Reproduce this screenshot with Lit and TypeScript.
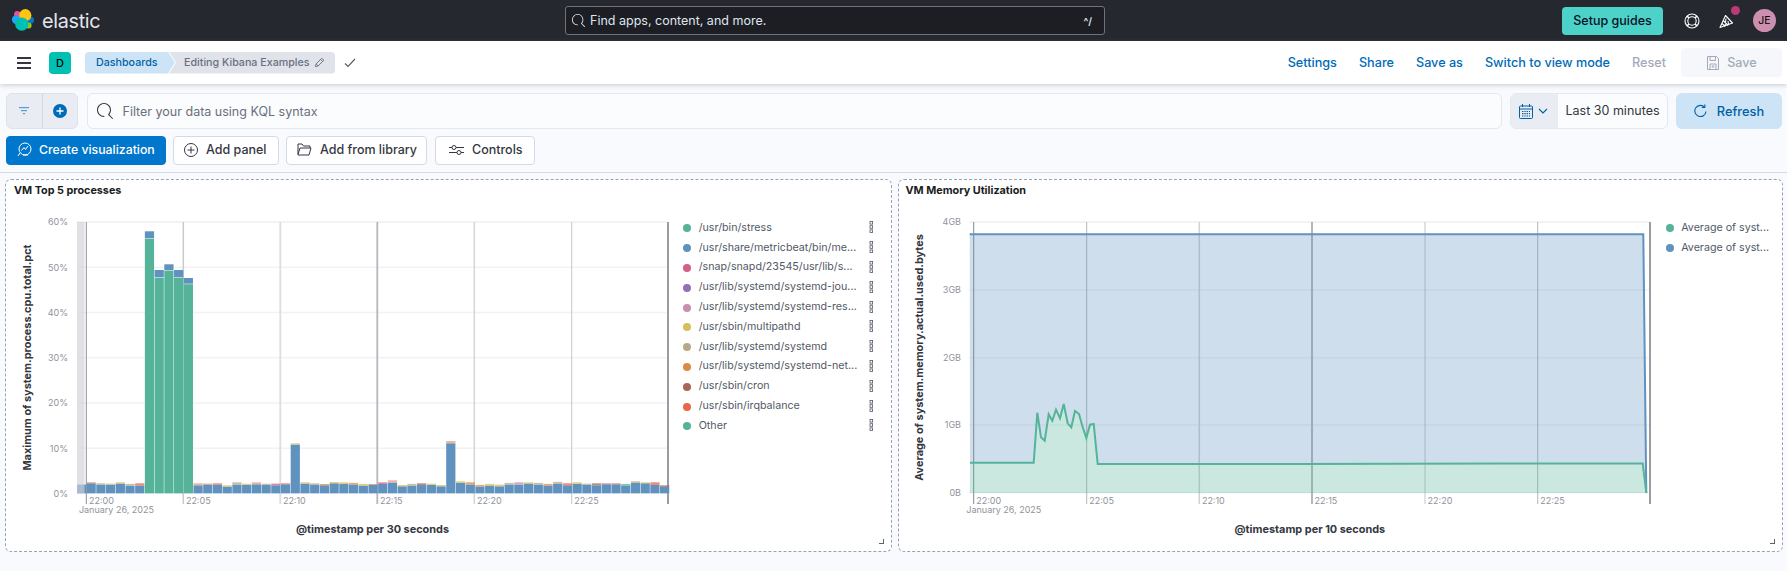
import { LitElement, css, html, svg } from 'lit';
import { customElement } from 'lit/decorators.js';

const C = {
    stress: '#54B399',
    beat: '#6092C0',
    snap: '#D36086',
    jou: '#9170B8',
    res: '#CA8EAE',
    multi: '#D6BF57',
    sysd: '#B9A888',
    net: '#DA8B45',
    cron: '#AA6556',
    irq: '#E7664C',
};

const topLegend: [string, string][] = [
    ['/usr/bin/stress', C.stress],
    ['/usr/share/metricbeat/bin/me...', C.beat],
    ['/snap/snapd/23545/usr/lib/s...', C.snap],
    ['/usr/lib/systemd/systemd-jou...', C.jou],
    ['/usr/lib/systemd/systemd-res...', C.res],
    ['/usr/sbin/multipathd', C.multi],
    ['/usr/lib/systemd/systemd', C.sysd],
    ['/usr/lib/systemd/systemd-net...', C.net],
    ['/usr/sbin/cron', C.cron],
    ['/usr/sbin/irqbalance', C.irq],
    ['Other', C.stress],
];

// [blue height, cap height, cap colour] in px above the 0% line
const smallBars: [number, number, string][] = [
    [8.3, 1, '#b9a9c8'], [10, 1, C.net], [8.7, 1.3, C.sysd], [8.7, 1, C.multi], [9.7, 1.3, C.multi], [7.7, 1.7, C.sysd], [7.7, 2.3, C.irq],
];
const afterSpike: [number, number, string][] = [
    [8, 2, '#e79a78'], [8.7, 1, C.net], [8.7, 1.3, C.irq], [6.7, 1.3, C.multi], [8.7, 2.3, C.sysd], [8.3, 1.3, C.multi],
    [9, 2, '#e79a88'], [8.3, 1.3, C.sysd], [8, 1.7, C.snap], [9, 1, C.irq], [48.7, 1.3, C.multi], [9.7, 1.3, C.multi],
    [8.7, 1.3, C.sysd], [8, 1.3, C.net], [10, 1.3, C.multi], [9.3, 1.7, C.multi], [8.7, 1.7, C.net], [7.7, 1.7, C.multi],
    [8.3, 1, C.net], [9.3, 1.7, C.snap], [10.7, 2.3, '#e79a88'], [7, 1.3, C.multi], [7.7, 1.7, C.sysd], [8.3, 1.7, C.cron],
    [8.3, 1.3, C.multi], [7, 1.3, C.multi], [50, 2.3, '#e79a88'], [10.3, 1.7, C.multi], [8.7, 2.3, C.net],
    [6.7, 1.7, C.net], [7.7, 1.7, C.multi], [7, 1.7, C.multi], [8.7, 1.7, C.sysd], [8.7, 2.3, C.res], [9.7, 1.3, C.multi],
    [8.7, 1.7, C.sysd], [7.7, 1.7, C.net], [9.7, 1.7, C.sysd], [8, 2, C.irq], [9.3, 1.7, C.multi], [8.3, 1.3, C.sysd],
    [8, 2, C.cron], [9, 1, C.snap], [9, 1, C.irq], [7.3, 2, C.stress], [10.3, 1.7, C.sysd], [10, 1, C.multi], [8.3, 2.7, C.irq], [6.3, 1.7, C.cron],
];
// [top of stack, top of green] in page px
const spike = [[231.3, 238.3], [270, 277.3], [264.3, 270], [270, 277.3], [278, 283.7]];

const greenLine: [number, number][] = [
    [969, 462.7], [1032.7, 462.7], [1036.3, 412.7], [1040, 437.3], [1043.7, 440.7], [1047.7, 414.3], [1051.3, 420.7],
    [1055, 409.7], [1059, 418.3], [1062.7, 404], [1066.7, 423.3], [1070.3, 427.3], [1074, 411], [1078, 414],
    [1081.7, 427.3], [1085.3, 438], [1089, 424.7], [1092.7, 424], [1096.7, 464], [1300, 464], [1500, 463.5], [1641.7, 463.5], [1645.3, 493],
];

type VLine = [number, number, string];
const topLines: VLine[] = [[86.3, 1, '#8e9096'], [183.3, 1.5, '#c9cbd0'], [280.3, 1.8, '#dcdde1'], [377.3, 1.8, '#b5b7bc'], [474.3, 1.5, '#d4d6da'], [571.7, 1, '#c4c6cb'], [668, 2, '#9a9ca2']];
const memLines: VLine[] = [[972.7, 1, '#85878d'], [1085.7, 1, '#b3b6bb'], [1198.3, 1.5, '#cfd1d5'], [1311, 2, '#b5b7bc'], [1424, 1, '#c4c6cb'], [1536.7, 1, '#b3b6bb'], [1649, 2, '#9a9ca2']];
const times = ['22:00', '22:05', '22:10', '22:15', '22:20', '22:25'];

const searchPath = 'M11.271 11.978l3.872 3.873a.502.502 0 00.708 0 .502.502 0 000-.708l-3.565-3.564c2.38-2.747 2.267-6.923-.342-9.532-2.73-2.73-7.17-2.73-9.898 0-2.728 2.729-2.728 7.17 0 9.9a6.955 6.955 0 004.949 2.05.5.5 0 000-1 5.96 5.96 0 01-4.242-1.757 6.01 6.01 0 010-8.486c2.337-2.34 6.143-2.34 8.484 0a6.01 6.01 0 010 8.486.5.5 0 00.034.738z';

function axisFrame(left: number, right: number, lines: VLine[], ys: [string, number][], labelX: number, yTitle: string, yTitleX: number, xTitle: string) {
    return svg`
        <rect x=${left} y="221.5" width=${right - left} height="1" fill="#eceef3"></rect>
        ${ys.map(([, y]) => svg`<rect x=${left} y=${y - 0.75} width=${right - left} height="1.5" fill="#f1f2f6"></rect>`)}
        ${lines.map(([x, w, c]) => svg`<rect x=${x - w / 2} y="222" width=${w} height="282" fill=${c}></rect>`)}
        ${ys.map(([t, y]) => svg`<text class="tick" x=${labelX} y=${y + 3.3} text-anchor="end">${t}</text>`)}
        ${times.map((t, i) => svg`<text class="tick" x=${lines[i][0] + 2.6} y="504">${t}</text>`)}
        <text class="tick" x=${lines[0][0] - 7.4} y="513">January 26, 2025</text>
        <text class="axis-title" x=${(left + right) / 2} y="533" text-anchor="middle">${xTitle}</text>
        <text class="axis-title" text-anchor="middle" transform="translate(${yTitleX} 357.5) rotate(-90)">${yTitle}</text>
    `;
}

function barsChart() {
    const step = 9.72;
    const x0 = 86.3;
    const base = 493.3;
    const rect = (i: number, top: number, bottom: number, fill: string, op = 1) => {
        const x = Math.max(77, x0 + i * step + 0.25);
        const w = x0 + (i + 1) * step - 0.25 - x;
        return svg`<rect x=${x} y=${top} width=${w} height=${bottom - top} fill=${fill} opacity=${op}></rect>`;
    };
    const small = (i: number, [h, cap, c]: [number, number, string]) => svg`
        ${rect(i, base - h, base, C.beat)}
        ${rect(i, base - h - cap, base - h, c, 0.75)}`;
    return svg`<svg class="chart" width="674" height="349" viewBox="6 202 674 349">
        ${axisFrame(77, 668, topLines,
            [['60%', 222], ['50%', 267.3], ['40%', 312.5], ['30%', 357.7], ['20%', 403], ['10%', 448.2], ['0%', 493.3]],
            68, 'Maximum of system.process.cpu.total.pct', 31, '@timestamp per 30 seconds')}
        ${smallBars.map((b, i) => small(i - 1, b))}
        ${spike.map(([t, g], i) => svg`${rect(i + 6, t, g, C.beat)}${rect(i + 6, g + 0.5, base, C.stress)}`)}
        ${afterSpike.map((b, i) => small(i + 11, b))}
        <rect x="77" y="222" width="7.5" height="271.5" fill="#cfd1d7" opacity="0.65"></rect>
    </svg>`;
}

function memoryChart() {
    const base = 493;
    const blueTop = 234.3;
    const green = greenLine.map(p => p.join(',')).join(' ');
    const reversed = [...greenLine].reverse().map(p => p.join(',')).join(' ');
    return svg`<svg class="chart" width="757" height="349" viewBox="898 202 757 349">
        ${axisFrame(968.7, 1649, memLines,
            [['4GB', 222], ['3GB', 290], ['2GB', 357.7], ['1GB', 425], ['0B', 492.7]],
            960, 'Average of system.memory.actual.used.bytes', 922, '@timestamp per 10 seconds')}
        <polygon points="968.7,${blueTop} 1642.3,${blueTop} 1645.3,${base} ${reversed}" fill=${C.beat} opacity="0.3"></polygon>
        <polygon points="${green} 968.7,${base}" fill=${C.stress} opacity="0.3"></polygon>
        <polyline points="968.7,${blueTop} 1642.3,${blueTop} 1645.3,${base}" fill="none" stroke=${C.beat} stroke-width="2"></polyline>
        <polyline points=${green} fill="none" stroke=${C.stress} stroke-width="2"></polyline>
    </svg>`;
}

const legendAction = html`<svg class="legend-action" width="5" height="12" viewBox="0 0 5 12" fill="none" stroke="#535966" stroke-width="0.8">
    <rect x="1" y="0.5" width="2.6" height="2.6"></rect><rect x="1" y="4.7" width="2.6" height="2.6"></rect><rect x="1" y="8.9" width="2.6" height="2.6"></rect>
</svg>`;

@customElement('app-root')
export class AppRoot extends LitElement {
    static styles = css`
        :host {
            display: block;
            width: 1787px;
            height: 571px;
            overflow: hidden;
            background: #f8fafd;
            font-family: Inter, "Liberation Sans", sans-serif;
            font-size: 12.5px;
            color: #343741;
        }
        svg { display: block; flex: none; }
        .top {
            display: flex;
            align-items: center;
            height: 41px;
            background: #25282f;
        }
        .brand {
            display: flex;
            align-items: center;
            width: 565px;
            flex: none;
            padding-left: 12px;
            box-sizing: border-box;
        }
        .wordmark {
            margin-left: 7px;
            font-size: 19.8px;
            line-height: 26px;
            letter-spacing: -0.3px;
            color: #e4e6ec;
        }
        .global-search {
            display: flex;
            align-items: center;
            width: 540px;
            height: 29px;
            box-sizing: border-box;
            border: 1px solid #6f727a;
            border-radius: 3px;
            background: #1d1e24;
            color: #dfe5ef;
            padding: 0 12px 0 6px;
            gap: 5px;
        }
        .shortcut { margin-left: auto; font-size: 10px; font-weight: 600; }
        .top-right { display: flex; align-items: center; margin-left: 457px; }
        .setup {
            width: 101px;
            height: 28px;
            line-height: 28px;
            text-align: center;
            background: #4dd2ca;
            border-radius: 4px;
            color: #07101f;
            font-weight: 500;
        }
        .help { margin-left: 21px; }
        .cheer-wrap { position: relative; margin-left: 19px; }
        .cheer-dot {
            position: absolute;
            top: -7px;
            right: -5px;
            width: 9px;
            height: 9px;
            border-radius: 50%;
            background: #bc3a77;
        }
        .avatar {
            width: 23px;
            height: 23px;
            margin-left: 18px;
            border-radius: 50%;
            background: #cc8fb0;
            color: #000;
            font-size: 10.5px;
            line-height: 23px;
            text-align: center;
        }
        .subnav {
            position: relative;
            display: flex;
            align-items: center;
            height: 43px;
            background: #fff;
            box-shadow: 0 1px 5px rgba(105, 112, 125, 0.35);
        }
        .burger { margin-left: 17px; }
        .space {
            width: 22px;
            height: 22px;
            margin-left: 18px;
            border-radius: 4px;
            background: #00bfb3;
            color: #000;
            font-size: 11px;
            font-weight: 500;
            line-height: 22px;
            text-align: center;
        }
        .crumbs { display: flex; margin-left: 14px; font-size: 10.7px; line-height: 22px; white-space: nowrap; }
        .crumb-first {
            width: 90px;
            padding-left: 11px;
            box-sizing: border-box;
            background: #cce4f5;
            color: #0061a6;
            font-weight: 500;
            border-radius: 4px 0 0 4px;
            clip-path: polygon(0 0, 83px 0, 100% 50%, 83px 100%, 0 100%);
        }
        .crumb-last {
            display: flex;
            align-items: center;
            gap: 4px;
            width: 166px;
            margin-left: -6px;
            padding-left: 15px;
            box-sizing: border-box;
            background: #e0e3ea;
            color: #69707d;
            font-weight: 500;
            border-radius: 0 4px 4px 0;
            clip-path: polygon(0 0, 100% 0, 100% 100%, 0 100%, 7px 50%);
        }
        .saved { margin-left: 9px; }
        .nav-links {
            display: flex;
            align-items: center;
            gap: 22px;
            margin-left: auto;
            padding-right: 5px;
            color: #006bb8;
            font-size: 12.65px;
            font-weight: 500;
        }
        .reset { color: #a2abba; }
        .save {
            display: flex;
            align-items: center;
            justify-content: center;
            gap: 7px;
            width: 101px;
            height: 29px;
            margin-left: -7px;
            border-radius: 4px;
            background: #f5f7fa;
            color: #a2abba;
        }
        .query-row { display: flex; height: 36px; margin: 9px 5px 0 6px; }
        .filter-group {
            display: flex;
            width: 72px;
            box-sizing: border-box;
            border: 1px solid #dde2eb;
            border-radius: 6px;
            background: #e9edf3;
        }
        .filter-cell { display: flex; flex: 1; align-items: center; justify-content: center; }
        .filter-cell + .filter-cell { border-left: 1px solid #d3dae6; }
        .query {
            display: flex;
            flex: 1;
            align-items: center;
            gap: 10px;
            margin-left: 8.5px;
            padding-left: 9px;
            border: 1px solid #e3e7ef;
            border-radius: 6px;
            background: #fbfcfd;
            color: #69707d;
        }
        .date {
            display: flex;
            width: 158px;
            margin-left: 7.5px;
            box-sizing: border-box;
            border: 1px solid #e3e7ef;
            border-radius: 6px;
            background: #fbfcfd;
            overflow: hidden;
        }
        .date-btn {
            display: flex;
            align-items: center;
            gap: 5px;
            width: 47px;
            padding-left: 8px;
            box-sizing: border-box;
            background: #e9edf3;
        }
        .date-text { padding-left: 8px; line-height: 34px; white-space: nowrap; }
        .refresh {
            display: flex;
            align-items: center;
            justify-content: center;
            gap: 10px;
            width: 106px;
            margin-left: 8.5px;
            border-radius: 6px;
            background: #cce4f5;
            color: #0061a6;
            font-size: 12.8px;
            font-weight: 500;
        }
        .action-row {
            display: flex;
            gap: 7px;
            height: 29px;
            margin: 7px 0 0 6px;
        }
        .btn {
            display: flex;
            align-items: center;
            gap: 8px;
            box-sizing: border-box;
            padding: 0 0 2px 10px;
            border: 1px solid #d3dae6;
            border-radius: 4px;
            background: #fff;
            font-weight: 500;
            white-space: nowrap;
        }
        .btn.primary { width: 160px; gap: 7px; border-color: #0077cc; background: #0077cc; color: #fff; font-size: 12.3px; }
        .btn.wide { width: 141px; }
        .btn.panel-btn { width: 106px; }
        .btn.controls { width: 100px; margin-left: 1px; padding-left: 13px; }
        .divider { height: 1px; margin-top: 7px; background: #d3dae6; }
        .grid { display: flex; gap: 6px; padding: 6px 4px 0 5px; }
        .panel {
            position: relative;
            box-sizing: border-box;
            height: 373px;
            border: 1px dashed #98a2b3;
            border-radius: 6px;
            background: #fff;
        }
        .panel-one { width: 887px; }
        .panel-two { width: 886px; }
        .panel-title {
            height: 22px;
            padding-left: 8px;
            font-size: 10.8px;
            font-weight: 700;
            line-height: 21px;
            color: #1a1c21;
        }
        .panel-two .panel-title { padding-left: 7px; }
        .panel-body { display: flex; }
        .tick { font-size: 9px; fill: #8f939c; }
        .axis-title { font-size: 10.9px; font-weight: 700; fill: #343741; }
        .legend { flex: 1; padding-top: 15.5px; font-size: 10.7px; color: #535966; }
        .legend-row { display: flex; align-items: center; height: 19.8px; white-space: nowrap; }
        .legend-one .legend-row { padding-left: 3px; }
        .legend-two .legend-row { padding-left: 10px; }
        .legend-dot { width: 8px; height: 8px; margin: 2px 7.7px 0 0; border-radius: 50%; flex: none; }
        .legend-action { margin-left: auto; margin-right: 17px; }
        .resize {
            position: absolute;
            right: 7px;
            bottom: 7px;
            width: 4px;
            height: 4px;
            border-right: 1.5px solid #5c6270;
            border-bottom: 1.5px solid #5c6270;
        }
    `;

    private legend(rows: [string, string][], cls: string, actions: boolean) {
        return html`<div class="legend ${cls}">
            ${rows.map(([name, colour]) => html`<div class="legend-row">
                <span class="legend-dot" style="background:${colour}"></span>
                <span>${name}</span>
                ${actions ? legendAction : ''}
            </div>`)}
        </div>`;
    }

    render() {
        return html`
            <div class="top">
                <div class="brand">
                    <svg width="23" height="23" viewBox="13 9 23 23">
                        <circle cx="18.3" cy="14.2" r="3.2" fill="#f04e98"></circle>
                        <circle cx="17.2" cy="19.6" r="4.3" fill="#1ba9f5"></circle>
                        <circle cx="31.6" cy="20.2" r="3.4" fill="#0077cc"></circle>
                        <circle cx="29.6" cy="25.6" r="3" fill="#93c90e"></circle>
                        <circle cx="26.3" cy="15.2" r="6.1" fill="#fec514"></circle>
                        <circle cx="22.8" cy="24.2" r="6.6" fill="#00bfb3"></circle>
                    </svg>
                    <span class="wordmark">elastic</span>
                </div>
                <div class="global-search">
                    <svg width="13" height="13" viewBox="0 0 16 16" fill="#dfe5ef"><path d=${searchPath}></path></svg>
                    <span>Find apps, content, and more.</span>
                    <span class="shortcut">^/</span>
                </div>
                <div class="top-right">
                    <div class="setup">Setup guides</div>
                    <svg class="help" width="16" height="16" viewBox="0 0 16 16" fill="none" stroke="#fff" stroke-width="1.1">
                        <circle cx="8" cy="8" r="7"></circle><circle cx="8" cy="8" r="4.2"></circle>
                        <path d="M3 3l2 2M13 3l-2 2M3 13l2-2M13 13l-2-2" stroke-width="1.6"></path>
                    </svg>
                    <div class="cheer-wrap">
                        <svg width="16" height="16" viewBox="0 0 16 16" fill="none" stroke="#fff" stroke-width="1.1" stroke-linejoin="round">
                            <path d="M1 14.5L6.5 2.5l7 7.5z"></path><path d="M4.2 7.5l5 5M3 10.5l3.2 3M7 5.5l-1 8M9 8l.5 3.5"></path>
                        </svg>
                        <span class="cheer-dot"></span>
                    </div>
                    <div class="avatar">JE</div>
                </div>
            </div>
            <div class="subnav">
                <svg class="burger" width="14" height="12" viewBox="0 0 14 12" fill="#343741">
                    <rect width="14" height="2"></rect><rect y="5" width="14" height="2"></rect><rect y="10" width="14" height="2"></rect>
                </svg>
                <div class="space">D</div>
                <div class="crumbs">
                    <span class="crumb-first">Dashboards</span>
                    <span class="crumb-last">Editing Kibana Examples
                        <svg width="11" height="11" viewBox="0 0 12 12" fill="none" stroke="#69707d">
                            <path d="M1.5 10.5l.8-3L8.5 1.3l2.2 2.2-6.2 6.2zM7.2 2.6l2.2 2.2M2.3 7.5l2.2 2.2"></path>
                        </svg>
                    </span>
                </div>
                <svg class="saved" width="12" height="10" viewBox="0 0 12 10" fill="none" stroke="#535966" stroke-width="1.1"><path d="M1 5.5l3 3L11 1"></path></svg>
                <div class="nav-links">
                    <span>Settings</span><span>Share</span><span>Save as</span><span>Switch to view mode</span><span class="reset">Reset</span>
                    <div class="save">
                        <svg width="14" height="14" viewBox="0 0 14 14" fill="none" stroke="#a2abba">
                            <path d="M1.5.5h9l2 2v11h-11zM4 .5v4h5.5v-4M4 13.5V8h6v5.5"></path><circle cx="7" cy="10.5" r=".8"></circle>
                        </svg>
                        Save
                    </div>
                </div>
            </div>
            <div class="query-row">
                <div class="filter-group">
                    <div class="filter-cell">
                        <svg width="10" height="8" viewBox="0 0 10 8" fill="#5a9bd1"><rect width="10" height="1.2"></rect><rect x="2" y="3" width="6" height="1.2"></rect><rect x="4" y="6" width="2" height="1.2"></rect></svg>
                    </div>
                    <div class="filter-cell">
                        <svg width="14" height="14" viewBox="0 0 14 14"><circle cx="7" cy="7" r="7" fill="#006bb8"></circle><path d="M7 3.5v7M3.5 7h7" stroke="#fff" stroke-width="1.3"></path></svg>
                    </div>
                </div>
                <div class="query">
                    <svg width="16" height="16" viewBox="0 0 16 16" fill="#343741"><path d=${searchPath}></path></svg>
                    <span>Filter your data using KQL syntax</span>
                </div>
                <div class="date">
                    <div class="date-btn">
                        <svg width="14" height="15" viewBox="0 0 14 15" fill="none" stroke="#0061a6">
                            <rect x=".5" y="2" width="13" height="12.5" rx="1"></rect><path d="M.5 5h13M3.5 0v3M10.5 0v3"></path>
                            <path d="M3 7.5h8M3 9.7h8M3 12h8" stroke-dasharray="1.4 .9" stroke-width="1.2"></path>
                        </svg>
                        <svg width="10" height="6" viewBox="0 0 10 6" fill="none" stroke="#0061a6" stroke-width="1.1"><path d="M1 1l4 4 4-4"></path></svg>
                    </div>
                    <div class="date-text">Last 30 minutes</div>
                </div>
                <div class="refresh">
                    <svg width="13" height="14" viewBox="0 0 13 14" fill="none" stroke="#0061a6" stroke-width="1.1">
                        <path d="M10.6 3.2A5.6 5.6 0 1 0 12 7.5"></path><path d="M10.8 .5v3h-3"></path>
                    </svg>
                    Refresh
                </div>
            </div>
            <div class="action-row">
                <div class="btn primary">
                    <svg width="15" height="15" viewBox="0 0 15 15" fill="none" stroke="#fff">
                        <circle cx="8" cy="7" r="6"></circle><path d="M4.5 8.5l2.5-3 1.5 2 2.5-3.5M3 11l-2 3M6 13h5"></path>
                    </svg>
                    Create visualization
                </div>
                <div class="btn panel-btn">
                    <svg width="14" height="14" viewBox="0 0 14 14" fill="none" stroke="#343741"><circle cx="7" cy="7" r="6.5"></circle><path d="M7 3.5v7M3.5 7h7"></path></svg>
                    Add panel
                </div>
                <div class="btn wide">
                    <svg width="15" height="13" viewBox="0 0 15 13" fill="none" stroke="#343741" stroke-linejoin="round"><path d="M1 11.5V1h4l1.5 2H13v2M1 11.5L3 5h11l-2 7H1z"></path></svg>
                    Add from library
                </div>
                <div class="btn controls">
                    <svg width="15" height="10" viewBox="0 0 15 10" fill="none" stroke="#343741"><path d="M0 2.5h3M7 2.5h8M0 7.5h8M12 7.5h3"></path><circle cx="5" cy="2.5" r="2"></circle><circle cx="10" cy="7.5" r="2"></circle></svg>
                    Controls
                </div>
            </div>
            <div class="divider"></div>
            <div class="grid">
                <div class="panel panel-one">
                    <div class="panel-title">VM Top 5 processes</div>
                    <div class="panel-body">
                        ${barsChart()}
                        ${this.legend(topLegend, 'legend-one', true)}
                    </div>
                    <span class="resize"></span>
                </div>
                <div class="panel panel-two">
                    <div class="panel-title">VM Memory Utilization</div>
                    <div class="panel-body">
                        ${memoryChart()}
                        ${this.legend([['Average of syst...', C.stress], ['Average of syst...', C.beat]], 'legend-two', false)}
                    </div>
                    <span class="resize"></span>
                </div>
            </div>
        `;
    }
}
